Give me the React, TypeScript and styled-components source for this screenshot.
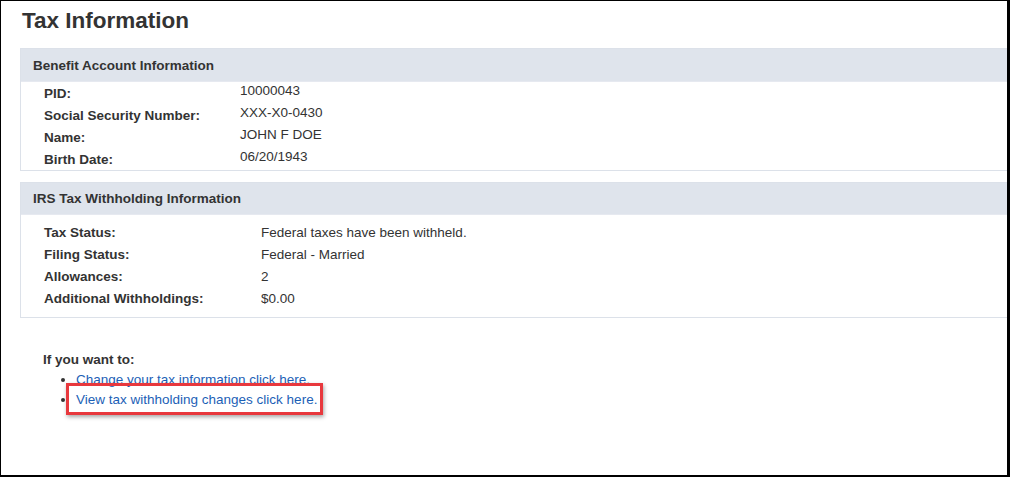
import styled, { createGlobalStyle } from 'styled-components';

const GlobalStyle = createGlobalStyle`
	html, body {
		margin: 0;
		padding: 0;
		background: #fff;
	}
	body {
		font-family: 'Liberation Sans', Arial, sans-serif;
		color: #333;
	}
`;

const Frame = styled.div`
	box-sizing: border-box;
	width: 1010px;
	height: 477px;
	border: 1px solid #000;
	border-right-width: 3px;
	border-bottom-width: 2px;
	overflow: hidden;
	padding: 0 0 0 19px;
`;

const Title = styled.h1`
	margin: 6px 0 0 2px;
	font-size: 22.5px;
	line-height: 28px;
	font-weight: bold;
	color: #333;
`;

const Panel = styled.section<{ $top: number }>`
	margin-top: ${({ $top }) => $top}px;
	margin-right: -20px;
	border: 1px solid #dce1e9;
	background: #fff;
`;

const PanelHeader = styled.div<{ $height: number }>`
	height: ${({ $height }) => $height}px;
	display: flex;
	align-items: center;
	padding-left: 12px;
	background: #dfe4ec;
	border-bottom: 1px solid #e6e9f0;
	font-size: 13.5px;
	font-weight: bold;
	color: #333;
`;

const PanelBody = styled.div<{ $padTop: number; $padBottom: number; $labelWidth: number }>`
	display: grid;
	grid-template-columns: ${({ $labelWidth }) => $labelWidth}px 1fr;
	grid-auto-rows: 22px;
	padding: ${({ $padTop }) => $padTop}px 0 ${({ $padBottom }) => $padBottom}px 23px;
	font-size: 13.5px;
	align-items: center;
`;

const Label = styled.div`
	font-weight: bold;
	color: #333;
`;

const Value = styled.div<{ $shift?: number }>`
	color: #333;
	transform: translateY(${({ $shift }) => $shift ?? 0}px);
`;

const Actions = styled.div`
	margin: 32px 0 0 23px;
	font-size: 13.5px;
`;

const ActionsTitle = styled.div`
	font-weight: bold;
	line-height: 20px;
`;

const LinkList = styled.ul`
	margin: 0;
	padding-left: 33px;
	list-style: disc;
	li {
		height: 20px;
		line-height: 20px;
	}
`;

const ActionLink = styled.a<{ $highlighted?: boolean }>`
	position: relative;
	color: #1c5fb6;
	text-decoration: none;
	cursor: pointer;

	${({ $highlighted }) =>
		$highlighted &&
		`
		&::after {
			content: '';
			position: absolute;
			left: -10px;
			right: -6px;
			top: -9px;
			bottom: -8px;
			border: 3px solid #e8383d;
			box-shadow: 1px 2px 4px rgba(0, 0, 0, 0.35);
			pointer-events: none;
		}
		`}
`;

const benefitRows = [
	['PID:', '10000043'],
	['Social Security Number:', 'XXX-X0-0430'],
	['Name:', 'JOHN F DOE'],
	['Birth Date:', '06/20/1943'],
];

const taxRows = [
	['Tax Status:', 'Federal taxes have been withheld.'],
	['Filing Status:', 'Federal - Married'],
	['Allowances:', '2'],
	['Additional Withholdings:', '$0.00'],
];

export default function App() {
	return (
		<>
			<GlobalStyle />
			<Frame>
				<Title>Tax Information</Title>

				<Panel $top={13}>
					<PanelHeader $height={32}>Benefit Account Information</PanelHeader>
					<PanelBody $padTop={0} $padBottom={0} $labelWidth={196}>
						{benefitRows.map(([label, value]) => (
							<>
								<Label key={label}>{label}</Label>
								<Value key={value} $shift={-3}>
									{value}
								</Value>
							</>
						))}
					</PanelBody>
				</Panel>

				<Panel $top={11}>
					<PanelHeader $height={31}>IRS Tax Withholding Information</PanelHeader>
					<PanelBody $padTop={6} $padBottom={8} $labelWidth={217}>
						{taxRows.map(([label, value]) => (
							<>
								<Label key={label}>{label}</Label>
								<Value key={value}>{value}</Value>
							</>
						))}
					</PanelBody>
				</Panel>

				<Actions>
					<ActionsTitle>If you want to:</ActionsTitle>
					<LinkList>
						<li>
							<ActionLink>Change your tax information click here.</ActionLink>
						</li>
						<li>
							<ActionLink $highlighted>View tax withholding changes click here.</ActionLink>
						</li>
					</LinkList>
				</Actions>
			</Frame>
		</>
	);
}
